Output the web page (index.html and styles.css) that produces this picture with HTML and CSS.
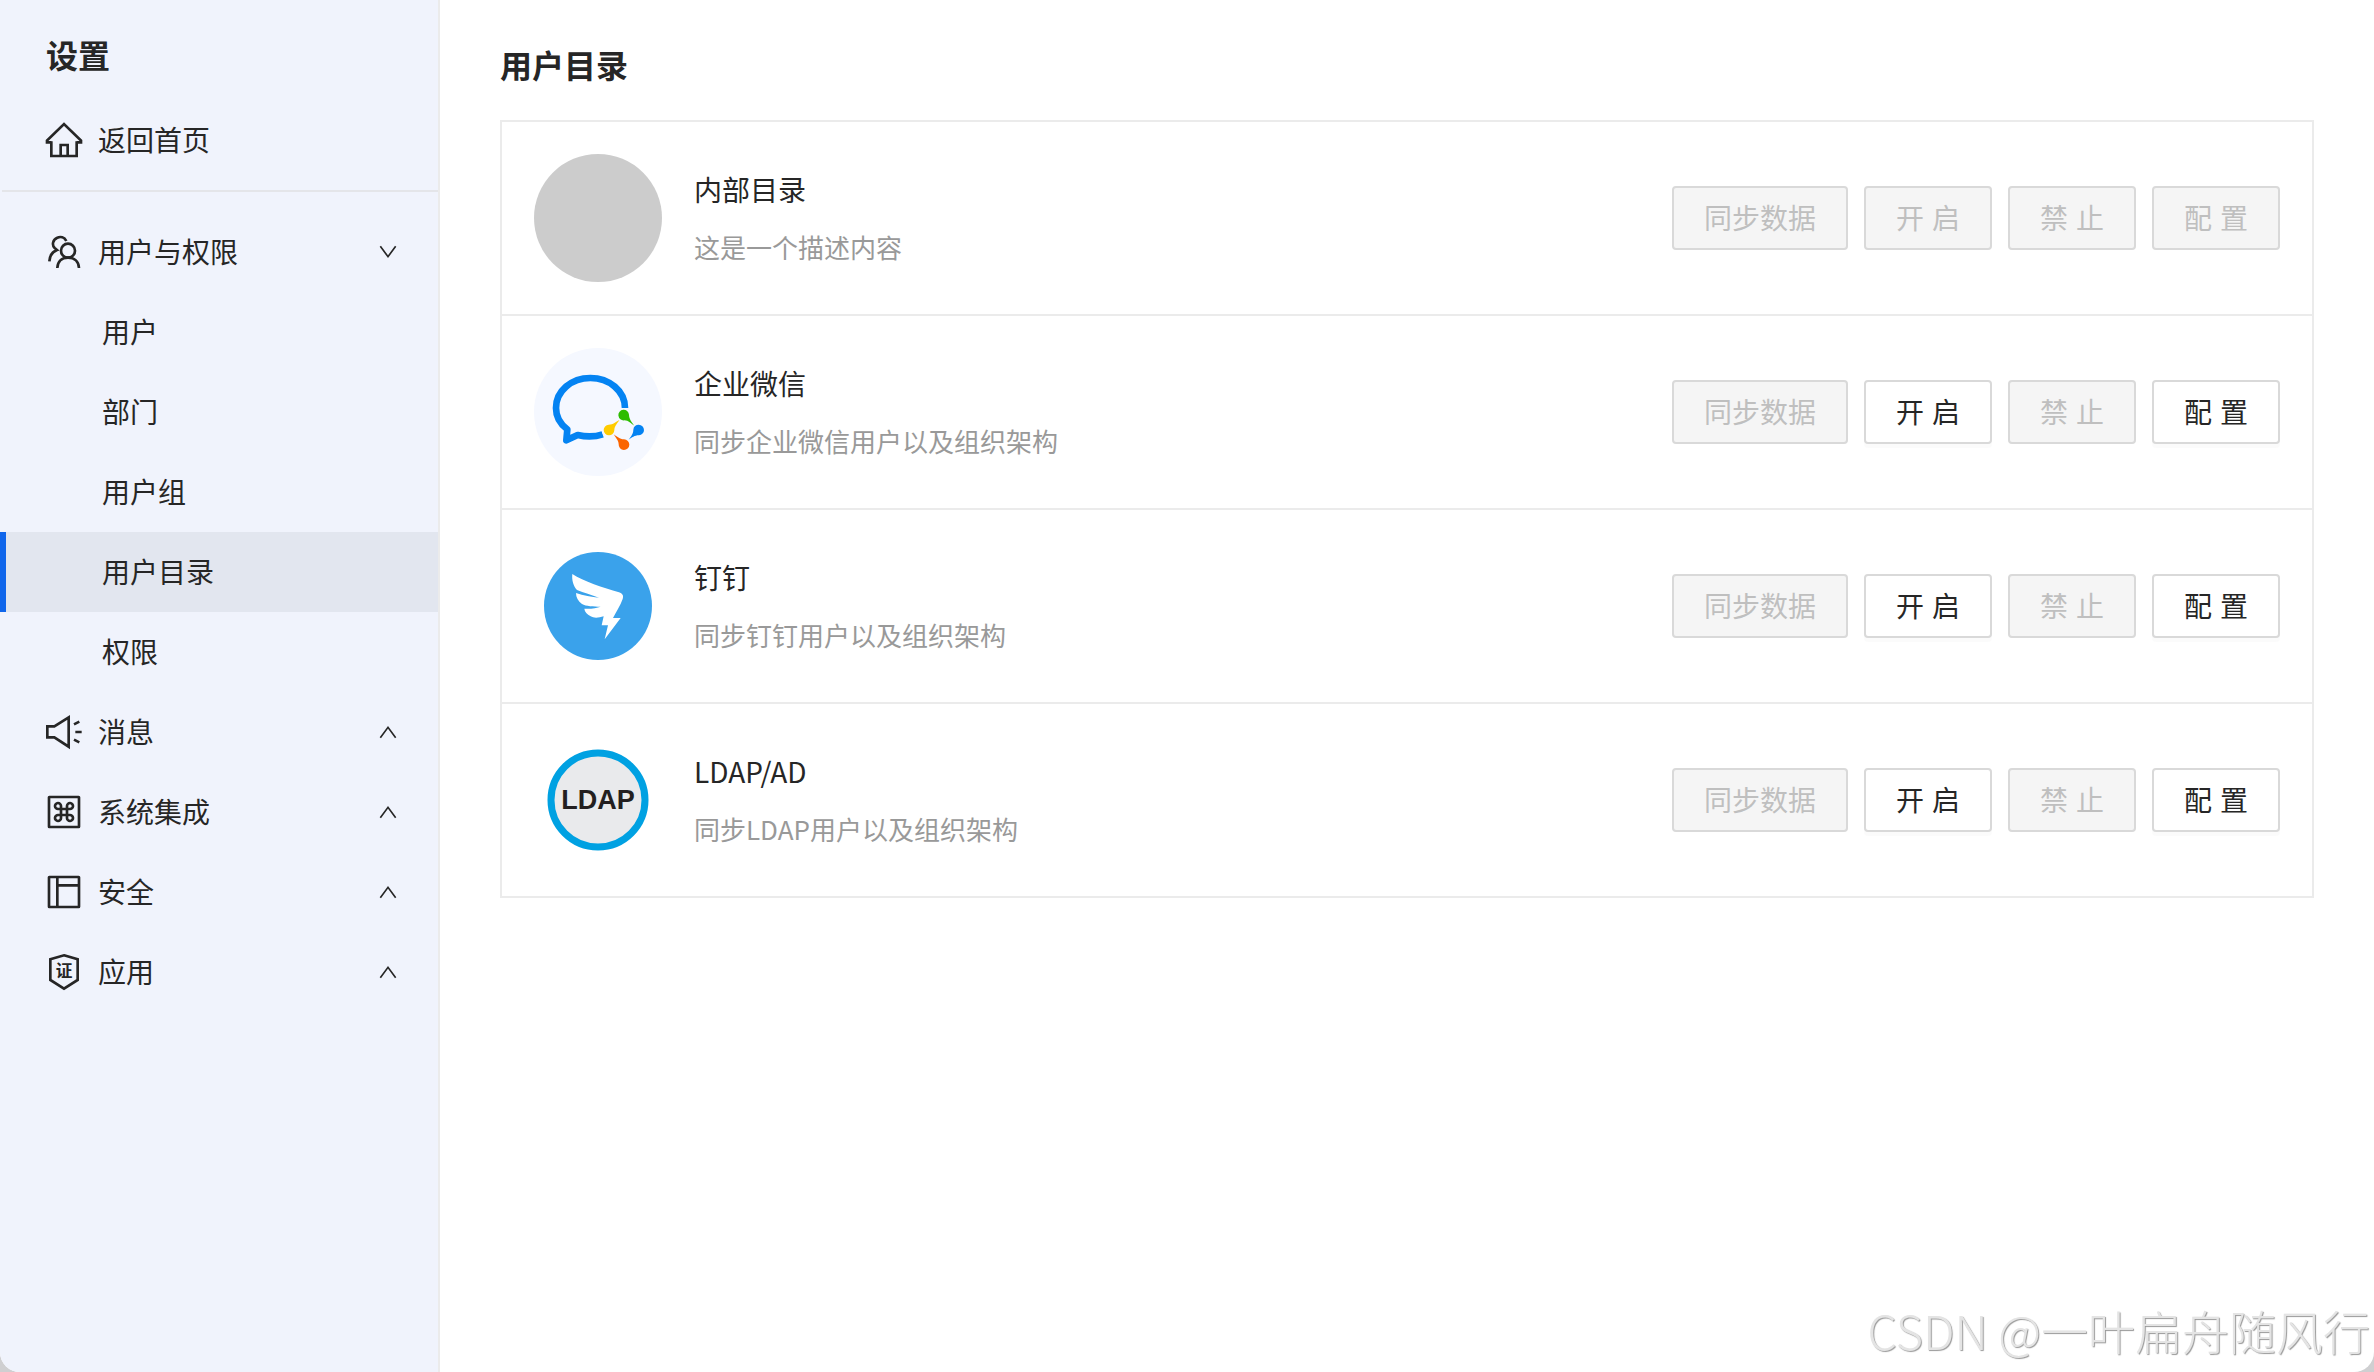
FILE: index.html
```html
<!DOCTYPE html>
<html lang="zh-CN">
<head>
<meta charset="utf-8">
<meta name="viewport" content="width=device-width, initial-scale=1">
<title>用户目录</title>
<link rel="stylesheet" href="styles.css">
</head>
<body>
<div class="app">
  <aside class="sidebar">
    <h2 class="sidebar-title">设置</h2>
    <a class="nav-row" href="#home">
      <svg class="icon" viewBox="138 366 108 108" aria-hidden="true"><path d="M154 424V468H230V424M182 468V435H203V468M154 427H141V422L192 372L243 422V427H230"/></svg>
      <span class="label">返回首页</span>
    </a>
    <hr class="divider">
    <nav class="menu">
      <button class="nav-row" type="button" aria-expanded="true">
        <svg class="icon" viewBox="138 702 108 108" aria-hidden="true"><circle cx="204" cy="752" r="21"/><path d="M172 804C173 784 186 773 204 773S236 784 237 804M199 723C193 711 181 709 172 713C158 719 155 735 164 744L171 750C158 755 149 768 148 784"/></svg>
        <span class="label">用户与权限</span>
        <svg class="chevron" viewBox="1128 720 72 72" aria-hidden="true"><path d="M1141 739L1164 770L1187 739"/></svg>
      </button>
      <ul class="submenu">
        <li><a class="sub-link" href="#users"><span class="label">用户</span></a></li>
        <li><a class="sub-link" href="#departments"><span class="label">部门</span></a></li>
        <li><a class="sub-link" href="#groups"><span class="label">用户组</span></a></li>
        <li><a class="sub-link active" href="#directories" aria-current="page"><span class="label">用户目录</span></a></li>
        <li><a class="sub-link" href="#permissions"><span class="label">权限</span></a></li>
      </ul>
      <button class="nav-row" type="button" aria-expanded="false">
        <svg class="icon" viewBox="48 72 108 108" aria-hidden="true"><path d="M52 109H73L116 82V170L73 142H52ZM132 103L148 95M136 126H155M132 149L148 157"/></svg>
        <span class="label">消息</span>
        <svg class="chevron" viewBox="48 120 72 72" aria-hidden="true"><path d="M61 173L84 142L107 173"/></svg>
      </button>
      <button class="nav-row" type="button" aria-expanded="false">
        <svg class="icon" viewBox="48 312 108 108" aria-hidden="true"><rect x="57" y="321" width="90" height="90" rx="1"/><path d="M93 357H111V375H93ZM93 357H85A9 9 0 1 1 93 348ZM111 357V348A9 9 0 1 1 119 357ZM111 375H119A9 9 0 1 1 111 384ZM93 375V384A9 9 0 1 1 85 375Z"/></svg>
        <span class="label">系统集成</span>
        <svg class="chevron" viewBox="48 120 72 72" aria-hidden="true"><path d="M61 173L84 142L107 173"/></svg>
      </button>
      <button class="nav-row" type="button" aria-expanded="false">
        <svg class="icon" viewBox="48 552 108 108" aria-hidden="true"><rect x="57" y="561" width="90" height="90" rx="1"/><path d="M82 561V651M82 586H147"/></svg>
        <span class="label">安全</span>
        <svg class="chevron" viewBox="48 120 72 72" aria-hidden="true"><path d="M61 173L84 142L107 173"/></svg>
      </button>
      <button class="nav-row" type="button" aria-expanded="false">
        <svg class="icon" viewBox="48 792 108 108" aria-hidden="true"><path d="M102 796L143 808V870L102 896L61 870V808Z"/><text class="icon-text" x="102" y="861" text-anchor="middle">证</text></svg>
        <span class="label">应用</span>
        <svg class="chevron" viewBox="48 120 72 72" aria-hidden="true"><path d="M61 173L84 142L107 173"/></svg>
      </button>
    </nav>
  </aside>

  <main class="content">
    <h1 class="page-title">用户目录</h1>
    <ul class="directories">
      <li class="directory">
        <div class="logo logo-empty"></div>
        <div class="info">
          <h3 class="name">内部目录</h3>
          <p class="desc">这是一个描述内容</p>
        </div>
        <div class="actions">
          <button class="btn btn-wide" type="button" disabled>同步数据</button>
          <button class="btn" type="button" disabled>开 启</button>
          <button class="btn" type="button" disabled>禁 止</button>
          <button class="btn" type="button" disabled>配 置</button>
        </div>
      </li>
      <li class="directory">
        <svg class="logo" viewBox="42 24 384 384" role="img" aria-label="企业微信">
          <circle cx="234" cy="216" r="192" fill="#f5f8ff"/>
          <path d="M315 204C315 153 268 114 211 114S108 153 108 204C108 230 120 252 142 268L139 301L173 285C199 291 224 291 248 283" fill="none" stroke="#0483f2" stroke-width="20" stroke-linejoin="round"/>
          <circle cx="311" cy="226" r="22" fill="#f5f8ff"/>
          <circle cx="267" cy="270" r="22" fill="#f5f8ff"/>
          <path d="M343 257C333 251 326 241 313 241A16 16 0 1 1 327 224C327 237 336 247 343 257Z" fill="#2dbc00"/>
          <path d="M298 240C293 250 283 257 283 271A16 16 0 1 1 266 254C280 254 287 246 298 240Z" fill="#fc0"/>
          <path d="M281 283C291 290 299 298 312 298A16 16 0 1 1 296 313C296 301 287 294 281 283Z" fill="#fb6500"/>
          <path d="M326 299C332 290 340 282 340 269A16 16 0 1 1 357 286C343 286 336 293 326 299Z" fill="#0483f2"/>
        </svg>
        <div class="info">
          <h3 class="name">企业微信</h3>
          <p class="desc">同步企业微信用户以及组织架构</p>
        </div>
        <div class="actions">
          <button class="btn btn-wide" type="button" disabled>同步数据</button>
          <button class="btn" type="button">开 启</button>
          <button class="btn" type="button" disabled>禁 止</button>
          <button class="btn" type="button">配 置</button>
        </div>
      </li>
      <li class="directory">
        <svg class="logo" viewBox="42 36 384 384" role="img" aria-label="钉钉">
          <circle cx="234" cy="228" r="162" fill="#3aa2eb"/>
          <path d="M157 132C190 154 250 173 297 187C307 190 312 197 308 207C301 227 288 246 279 264H302L254 328L264 286H245L251 259C236 264 221 265 212 259C201 253 194 246 193 236C210 238 230 234 242 230C220 230 198 229 186 222C174 214 168 202 168 189C190 196 215 202 237 203C215 195 191 188 171 180C160 168 155 150 157 132Z" fill="#fff"/>
        </svg>
        <div class="info">
          <h3 class="name">钉钉</h3>
          <p class="desc">同步钉钉用户以及组织架构</p>
        </div>
        <div class="actions">
          <button class="btn btn-wide" type="button" disabled>同步数据</button>
          <button class="btn" type="button">开 启</button>
          <button class="btn" type="button" disabled>禁 止</button>
          <button class="btn" type="button">配 置</button>
        </div>
      </li>
      <li class="directory">
        <svg class="logo" viewBox="0 0 128 128" role="img" aria-label="LDAP">
          <circle cx="64" cy="64" r="47" fill="#e9eaec" stroke="#00a1e2" stroke-width="7"/>
          <text class="ldap-text" x="64" y="73" text-anchor="middle">LDAP</text>
        </svg>
        <div class="info">
          <h3 class="name">LDAP/AD</h3>
          <p class="desc">同步LDAP用户以及组织架构</p>
        </div>
        <div class="actions">
          <button class="btn btn-wide" type="button" disabled>同步数据</button>
          <button class="btn" type="button">开 启</button>
          <button class="btn" type="button" disabled>禁 止</button>
          <button class="btn" type="button">配 置</button>
        </div>
      </li>
    </ul>
  </main>
</div>
<div class="watermark">CSDN @一叶扁舟随风行</div>
</body>
</html>
```
FILE: styles.css
```css
* {
  box-sizing: border-box;
}

body {
  margin: 0;
  background: #cfcfd1;
  color: #262626;
  font-family: "Noto Sans CJK SC", sans-serif;
  font-size: 28px;
  line-height: 44px;
}

h1,
h2,
h3,
p,
ul {
  margin: 0;
  padding: 0;
}

ul {
  list-style: none;
}

.app {
  display: flex;
  min-height: 100vh;
  overflow: hidden;
  border-radius: 0 0 20px 20px;
  background: #fff;
}

/* Sidebar */
.sidebar {
  flex: none;
  width: 440px;
  padding-top: 30px;
  border-right: 2px solid #ebebeb;
  background: #f0f3fc;
}

.sidebar-title {
  padding: 0 46px;
  font-size: 32px;
  line-height: 48px;
  margin-bottom: 22px;
}

.nav-row {
  display: flex;
  align-items: center;
  gap: 16px;
  width: 100%;
  height: 80px;
  padding: 0 38px 0 46px;
  border: 0;
  background: none;
  color: inherit;
  font: inherit;
  text-align: left;
  text-decoration: none;
  cursor: pointer;
}

.label {
  padding-bottom: 2px;
}

.icon {
  flex: none;
  width: 36px;
  height: 36px;
  overflow: visible;
  fill: none;
  stroke: currentColor;
  stroke-width: 8px;
}

.icon-text {
  fill: currentColor;
  stroke: none;
  font-size: 50px;
  font-weight: 700;
}

.chevron {
  flex: none;
  width: 24px;
  height: 24px;
  margin-left: auto;
  fill: none;
  stroke: currentColor;
  stroke-width: 5px;
}

.divider {
  height: 2px;
  margin: 10px 0 20px 2px;
  border: 0;
  background: #e4e5e9;
}

.sub-link {
  display: flex;
  align-items: center;
  height: 80px;
  padding-left: 96px;
  border-left: 6px solid transparent;
  color: inherit;
  text-decoration: none;
}

.sub-link.active {
  border-left-color: #1066eb;
  background: #e2e6ef;
}

/* Content */
.content {
  flex: 1;
  min-width: 0;
  padding: 40px 60px;
}

.page-title {
  margin-bottom: 32px;
  font-size: 32px;
  line-height: 48px;
}

.directories {
  border: 2px solid #ebebeb;
}

.directory {
  display: flex;
  align-items: center;
  gap: 32px;
  padding: 32px;
}

.directory + .directory {
  border-top: 2px solid #ebebeb;
}

.logo {
  flex: none;
  width: 128px;
  height: 128px;
}

.logo-empty {
  border-radius: 50%;
  background: #ccc;
}

.ldap-text {
  fill: #231f20;
  font-family: "Liberation Sans", sans-serif;
  font-size: 27px;
  font-weight: 700;
}

.info {
  display: flex;
  flex: 1;
  flex-direction: column;
  gap: 16px;
  min-width: 0;
  padding-bottom: 2px;
}

.name {
  font-size: 28px;
  font-weight: 400;
  line-height: 44px;
}

.desc {
  color: #999;
  font-size: 26px;
  line-height: 40px;
}

.actions {
  display: flex;
  flex: none;
  gap: 16px;
}

.btn {
  width: 128px;
  height: 64px;
  padding: 0 0 2px;
  border: 2px solid #d9d9d9;
  border-radius: 4px;
  background: #fff;
  box-shadow: 0 4px 0 rgba(0, 0, 0, 0.015);
  color: #262626;
  font-family: "Liberation Sans", "Noto Sans CJK SC", sans-serif;
  font-size: 28px;
  cursor: pointer;
}

.btn-wide {
  width: 176px;
}

.btn:disabled {
  background: #f5f5f5;
  box-shadow: none;
  color: #bfbfbf;
  cursor: default;
}

.watermark {
  position: fixed;
  right: 4px;
  bottom: 8px;
  color: #e4e4e4;
  font-size: 47px;
  font-weight: 300;
  line-height: 68px;
  text-shadow: 1px 1px 1px #999;
  pointer-events: none;
}
```
